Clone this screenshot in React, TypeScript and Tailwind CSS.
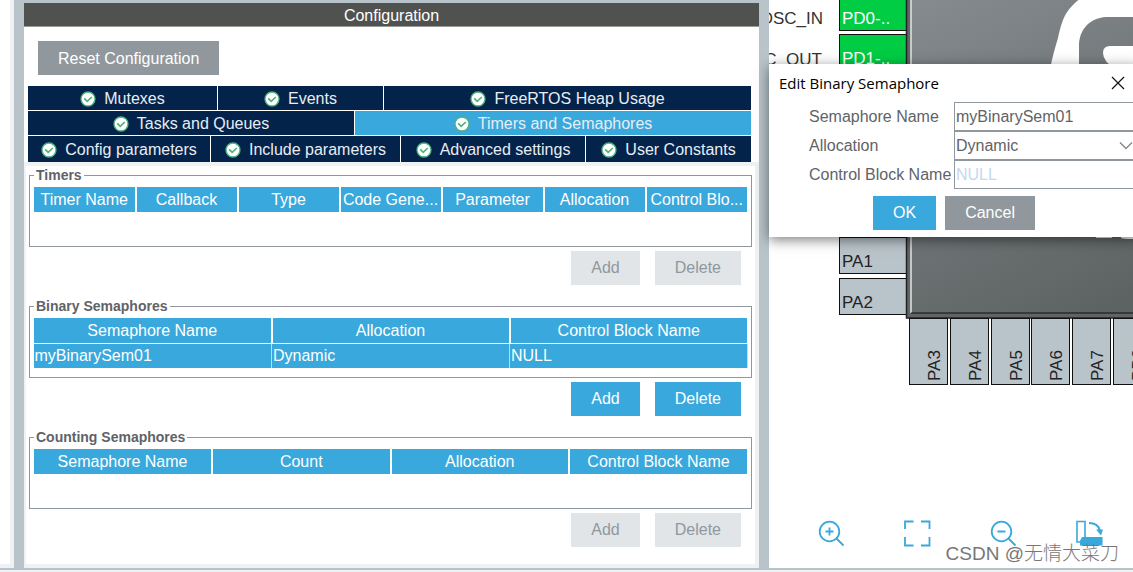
import React from "react";

const blue = "#39a8dc";

function CheckBadge() {
  return (
    <svg width="16" height="16" viewBox="0 0 16 16" className="shrink-0" aria-hidden="true">
      <circle cx="8" cy="8" r="7" fill="#fff" stroke="#4fb27e" strokeWidth="1.3" />
      <path d="M4.2 7.4 7.2 10.4 11.8 6" fill="none" stroke="#4fb27e" strokeWidth="1.7" />
    </svg>
  );
}

type TabItem = { label: string; grow: string; active?: boolean };

const tabRows: TabItem[][] = [
  [
    { label: "Mutexes", grow: "flex-[189]" },
    { label: "Events", grow: "flex-[165]" },
    { label: "FreeRTOS Heap Usage", grow: "flex-[367]" },
  ],
  [
    { label: "Tasks and Queues", grow: "flex-[326]" },
    { label: "Timers and Semaphores", grow: "flex-[396]", active: true },
  ],
  [
    { label: "Config parameters", grow: "flex-[182]" },
    { label: "Include parameters", grow: "flex-[189]" },
    { label: "Advanced settings", grow: "flex-[184]" },
    { label: "User Constants", grow: "flex-[165]" },
  ],
];

function Tabs() {
  return (
    <div role="tablist" className="mr-2 ml-1 flex flex-col gap-px">
      {tabRows.map((row, i) => (
        <div key={i} className={`flex gap-px ${i === tabRows.length - 1 ? "h-[26px]" : "h-6"}`}>
          {row.map((t) => (
            <button
              key={t.label}
              role="tab"
              aria-selected={!!t.active}
              className={`flex min-w-0 items-center justify-center gap-2 pt-0.5 whitespace-nowrap text-[#e9edf2] ${t.grow} ${
                t.active ? "bg-[#39a8dc]" : "bg-[#03234b]"
              }`}
            >
              <CheckBadge />
              {t.label}
            </button>
          ))}
        </div>
      ))}
    </div>
  );
}

type SectionProps = {
  title: string;
  columns: string[];
  rows?: string[][];
  enabled?: boolean;
};

function Section({ title, columns, rows = [], enabled }: SectionProps) {
  const button = enabled ? "bg-[#39a8dc] text-white" : "bg-[#e1e5e8] text-[#90989e]";
  return (
    <section className="mb-[13px]">
      <fieldset className="h-20 border border-[#90989e] px-[3px]">
        <legend className="ml-px px-0.5 text-sm leading-4 font-bold text-[#5f6368]">{title}</legend>
        <table className="mt-1 w-full table-fixed border-collapse">
          <thead>
            <tr>
              {columns.map((c) => (
                <th
                  key={c}
                  className="h-6 border-x-2 border-b border-white bg-[#39a8dc] p-0 pt-px text-center leading-6 font-normal whitespace-nowrap text-white first:border-l last:border-r"
                >
                  {c}
                </th>
              ))}
            </tr>
          </thead>
          <tbody>
            {rows.map((r) => (
              <tr key={r[0]}>
                {r.map((c) => (
                  <td
                    key={c}
                    className="h-6 border-r border-[#b8dff2] bg-[#39a8dc] p-0 pl-px text-left leading-6 text-white"
                  >
                    {c}
                  </td>
                ))}
              </tr>
            ))}
          </tbody>
        </table>
      </fieldset>
      <div className="mt-1 mr-[11px] flex justify-end gap-[15px]">
        <button disabled={!enabled} className={`h-[34px] px-5 ${button}`}>
          Add
        </button>
        <button disabled={!enabled} className={`h-[34px] px-5 ${button}`}>
          Delete
        </button>
      </div>
    </section>
  );
}

function Configuration() {
  return (
    <main className="flex min-w-0 flex-[735] flex-col bg-white">
      <h1 className="h-6 border-b border-[#9a9c9b] bg-[#50524f] pt-px text-center leading-6 text-white">
        Configuration
      </h1>
      <button className="mt-[14px] mb-[11px] ml-[14px] h-[34px] self-start bg-[#90989e] px-5 pt-px text-white">
        Reset Configuration
      </button>
      <Tabs />
      <div className="grow border-4 border-l-2 border-[#f0f1f3] px-[3px] pt-px">
        <Section
          title="Timers"
          columns={["Timer Name", "Callback", "Type", "Code Gene...", "Parameter", "Allocation", "Control Blo..."]}
        />
        <Section
          title="Binary Semaphores"
          columns={["Semaphore Name", "Allocation", "Control Block Name"]}
          rows={[["myBinarySem01", "Dynamic", "NULL"]]}
          enabled
        />
        <Section title="Counting Semaphores" columns={["Semaphore Name", "Count", "Allocation", "Control Block Name"]} />
      </div>
    </main>
  );
}

function ChipDrawing() {
  const bottomPins = ["PA3", "PA4", "PA5", "PA6", "PA7", "PB0"];
  return (
    <svg width="420" height="400" className="absolute top-0 left-0 font-['Liberation_Sans',sans-serif] text-[17px]">
      <defs>
        <linearGradient id="body" gradientUnits="userSpaceOnUse" x1="140" y1="0" x2="300" y2="330">
          <stop offset="0" stopColor="#858b8f" />
          <stop offset="1" stopColor="#5d6262" />
        </linearGradient>
      </defs>
      <text x="54" y="24" textAnchor="end" fill="#333">OSC_IN</text>
      <text x="53" y="65" textAnchor="end" fill="#333">OSC_OUT</text>
      {[
        { y: -6, label: "PD0-..", on: true },
        { y: 34, label: "PD1-..", on: true },
        { y: 237, label: "PA1", on: false },
        { y: 278, label: "PA2", on: false },
      ].map((p) => (
        <g key={p.label}>
          <rect x="70.5" y={p.y + 0.5} width="68" height="36" fill={p.on ? "#00cc44" : "#b9c4ca"} stroke="#111" />
          <text x="73" y={p.y + 30} fill={p.on ? "#fff" : "#222"}>{p.label}</text>
        </g>
      ))}
      <rect x="137.5" y="-5" width="300" height="323" fill="#5f6566" stroke="#222" strokeWidth="1.5" />
      <rect x="142" y="-5" width="300" height="318" fill="url(#body)" />
      <path d="M142 0V313" stroke="#e4e6e7" strokeWidth="1.5" />
      <path d="M142 313H420" stroke="#111" />
      <path d="M281 70C283 58 286 48 289 38C293 20 296 10 312 -2H420V17H337C320 18 310 30 310 46V70Z" fill="#fff" />
      <path d="M334 53Q334 46 341 46H420V70H348Q334 62 334 53Z" fill="#fff" />
      <path d="M327 236H343V238H327ZM352 236H420V239H362Q354 239 352 238Z" fill="#fff" />
      {bottomPins.map((label, i) => (
        <g key={label}>
          <rect x={140.5 + Math.round(i * 40.8)} y="318.5" width="38" height="66" fill="#b9c4ca" stroke="#111" />
          <text transform={`translate(${171 + Math.round(i * 40.8)} 381) rotate(-90)`} fill="#222">{label}</text>
        </g>
      ))}
    </svg>
  );
}

function Dialog() {
  const field = "h-[29px] w-full rounded-none border border-[#90989e] bg-white px-px text-[#5f6368] outline-none";
  return (
    <div
      role="dialog"
      aria-labelledby="dialog-title"
      className="absolute top-16 -right-2 left-0 h-[173px] bg-white shadow-[0_3px_12px_rgba(0,0,0,0.5)]"
    >
      <div className="flex h-[38px] items-center justify-between pr-4 pl-[10px]">
        <h2 id="dialog-title" className="font-['Open_Sans',sans-serif] text-[15px] text-black">
          Edit Binary Semaphore
        </h2>
        <button aria-label="Close">
          <svg width="14" height="14" viewBox="0 0 14 14">
            <path d="M1 1 13 13M13 1 1 13" stroke="#111" strokeWidth="1.2" />
          </svg>
        </button>
      </div>
      <form className="grid grid-cols-[145px_1fr] items-center pl-10 text-[#5f6368]">
        <label htmlFor="sem-name">Semaphore Name</label>
        <input id="sem-name" defaultValue="myBinarySem01" className={field} />
        <label htmlFor="alloc">Allocation</label>
        <div className="relative">
          <select id="alloc" className={`${field} block appearance-none`}>
            <option>Dynamic</option>
          </select>
          <svg width="14" height="10" viewBox="0 0 14 10" className="pointer-events-none absolute top-[10px] right-2">
            <path d="M1 1.5 7 7.5 13 1.5" fill="none" stroke="#83898e" strokeWidth="1.4" />
          </svg>
        </div>
        <label htmlFor="block" className="whitespace-nowrap">Control Block Name</label>
        <input
          id="block"
          disabled
          defaultValue="NULL"
          className="h-[29px] w-full rounded-none border border-[#90989e] bg-white px-px text-[#c4d8ee]"
        />
      </form>
      <div className="mt-[7px] flex justify-center gap-[9px] pr-0.5">
        <button className="h-[34px] bg-[#39a8dc] px-5 text-white">OK</button>
        <button className="h-[34px] bg-[#90989e] px-5 text-white">Cancel</button>
      </div>
    </div>
  );
}

function Toolbar() {
  return (
    <div className="absolute bottom-[21px] left-[49px] flex gap-[59px]">
      <button aria-label="Zoom in">
        <svg width="27" height="27" viewBox="0 0 27 27" fill="none" stroke={blue} strokeWidth="1.8">
          <circle cx="11.5" cy="11.5" r="9.8" />
          <path d="M18.5 18.5 25.5 25.5M7.5 11.5H15.5M11.5 7.5V15.5" />
        </svg>
      </button>
      <button aria-label="Fit to window">
        <svg width="27" height="27" viewBox="0 0 27 27" fill="none" stroke={blue} strokeWidth="1.8">
          <path d="M1 9V1.5H9.5M17 1.5H25.5V9M25.5 17V25.5H17M9.5 25.5H1V17" />
        </svg>
      </button>
      <button aria-label="Zoom out">
        <svg width="27" height="27" viewBox="0 0 27 27" fill="none" stroke={blue} strokeWidth="1.8">
          <circle cx="11.5" cy="11.5" r="9.8" />
          <path d="M18.5 18.5 25.5 25.5M7.5 11.5H15.5" />
        </svg>
      </button>
      <button aria-label="Rotate">
        <svg width="27" height="27" viewBox="0 0 27 27" fill="none" stroke={blue} strokeWidth="1.6">
          <path d="M1 1.5H9V17L4 22H1Z" />
          <path d="M4 21 6 17H26.5V25.5H4Z" fill={blue} stroke="none" />
          <path d="M13 3C19 3 23 6 24 11" strokeWidth="2" />
          <path d="M20 9.5H27L25 15.5Z" fill={blue} stroke="none" />
        </svg>
      </button>
    </div>
  );
}

export default function App() {
  return (
    <div className="min-h-screen overflow-hidden bg-[#f0f1f3] font-['Liberation_Sans',Arial,sans-serif] text-base leading-6">
      <div className="flex h-[calc(100vh-2px)] min-h-[570px] border-b-2 border-[#b8c4ca] bg-[#b8c4ca]">
        <div className="w-[14px] shrink-0 border-r-4 border-b-4 border-[#f0f1f3] bg-white" />
        <div className="w-[10px] shrink-0" />
        <div className="flex min-w-0 flex-[735] pt-[3px]">
          <Configuration />
        </div>
        <div className="w-[10px] shrink-0" />
        <div className="relative min-w-0 flex-[364] bg-white">
          <div className="absolute inset-0 overflow-hidden">
            <ChipDrawing />
          </div>
          <Dialog />
          <Toolbar />
          <p className="absolute right-[14px] bottom-0.5 font-['Liberation_Sans','Noto_Sans_CJK_SC',sans-serif] text-[19px] font-light whitespace-nowrap text-[#777]">
            CSDN @无情大菜刀
          </p>
        </div>
      </div>
    </div>
  );
}
